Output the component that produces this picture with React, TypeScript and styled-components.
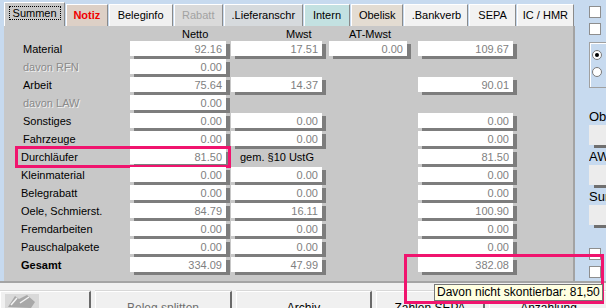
import React from 'react';
import styled, { createGlobalStyle } from 'styled-components';

type Row = {
  label: string;
  netto?: string;
  mwst?: string;
  at?: string;
  total?: string;
  note?: string;
  muted?: boolean;
  bold?: boolean;
  indent?: number;
  highlight?: boolean;
};

const rows: Row[] = [
  { label: 'Material', netto: '92.16', mwst: '17.51', at: '0.00', total: '109.67', indent: 2 },
  { label: 'davon RFN', netto: '0.00', muted: true, indent: 2 },
  { label: 'Arbeit', netto: '75.64', mwst: '14.37', total: '90.01', indent: 2 },
  { label: 'davon LAW', netto: '0.00', muted: true, indent: 2 },
  { label: 'Sonstiges', netto: '0.00', mwst: '0.00', total: '0.00', indent: 2 },
  { label: 'Fahrzeuge', netto: '0.00', mwst: '0.00', total: '0.00', indent: 2 },
  { label: 'Durchläufer', netto: '81.50', note: 'gem. §10 UstG', total: '81.50', highlight: true },
  { label: 'Kleinmaterial', netto: '0.00', mwst: '0.00', total: '0.00' },
  { label: 'Belegrabatt', netto: '0.00', mwst: '0.00', total: '0.00' },
  { label: 'Oele, Schmierst.', netto: '84.79', mwst: '16.11', total: '100.90' },
  { label: 'Fremdarbeiten', netto: '0.00', mwst: '0.00', total: '0.00' },
  { label: 'Pauschalpakete', netto: '0.00', mwst: '0.00', total: '0.00' },
  { label: 'Gesamt', netto: '334.09', mwst: '47.99', total: '382.08', bold: true },
];

const tabs = [
  { label: 'Summen', w: 62, bg: '#c8c8c8', active: true },
  { label: 'Notiz', w: 42, bg: '#ddd0c6', color: '#f00000', bold: true },
  { label: 'Beleginfo', w: 65, bg: '#f0f0f0' },
  { label: 'Rabatt', w: 50, bg: '#dadada', color: '#a2a2a2' },
  { label: '.Lieferanschr', w: 80, bg: '#d6dadd' },
  { label: 'Intern', w: 47, bg: '#c3e1e1' },
  { label: 'Obelisk', w: 53, bg: '#e3dcd2' },
  { label: '.Bankverb', w: 65, bg: '#f2f2f2' },
  { label: 'SEPA', w: 47, bg: '#f2f2f2' },
  { label: 'IC / HMR', w: 58, bg: '#f2f2f2' },
];

const buttons = [
  { label: '', w: 91, icon: true },
  { label: 'Beleg splitten', w: 137, muted: true },
  { label: 'Archiv', w: 136 },
  { label: 'Zahlen SEPA', w: 109 },
  { label: 'Anzahlung', w: 120 },
];

const App = () => {
  return (
    <Screen>
      <GlobalStyle />
      <Top>
        <Main>
          <TabBar>
            {tabs.map((t) => (
              <Tab key={t.label} $w={t.w} $bg={t.bg} $active={!!t.active} $color={t.color} $bold={!!t.bold}>
                {t.active ? <Focus>{t.label}</Focus> : t.label}
              </Tab>
            ))}
          </TabBar>
          <Panel>
            <HeaderRow>
              <span />
              <HeaderCell $pl={52}>Netto</HeaderCell>
              <HeaderCell $pl={55}>Mwst</HeaderCell>
              <HeaderCell $pl={20}>AT-Mwst</HeaderCell>
              <span />
            </HeaderRow>
            {rows.map((r) => (
              <SumRow key={r.label}>
                <Label $muted={!!r.muted} $bold={!!r.bold} $indent={r.indent ?? 0}>
                  {r.label}
                </Label>
                <Cell>{r.netto && <Field $w={96}>{r.netto}</Field>}</Cell>
                <Cell>
                  {r.mwst && <Field $w={91}>{r.mwst}</Field>}
                  {r.note && <Note>{r.note}</Note>}
                </Cell>
                <Cell>{r.at && <Field $w={78}>{r.at}</Field>}</Cell>
                <Cell>{r.total && <Field $w={95}>{r.total}</Field>}</Cell>
                {r.highlight && <RowMark />}
              </SumRow>
            ))}
          </Panel>
        </Main>
        <Side>
          <Check $mt={6} />
          <Check $mt={5} />
          <Group>
            <Radio $on />
            <Radio />
          </Group>
          <SideLabel $mt={22}>Ob</SideLabel>
          <SideField />
          <SideLabel $mt={5}>AW</SideLabel>
          <SideField />
          <SideLabel $mt={5}>Sur</SideLabel>
          <SideField />
          <Check $mt={23} />
          <Check $mt={6} />
        </Side>
      </Top>
      <Bottom>
        <ButtonRow>
          {buttons.map((b, i) => (
            <BarButton key={i} $w={b.w} $muted={!!b.muted}>
              {b.icon ? (
                <svg width="34" height="16" viewBox="0 0 34 16">
                  <rect x="0" y="1" width="34" height="15" fill="#d9d9d9" />
                  <path d="M3 14 L10 3 L14 6 L22 2 L30 9 L26 15 Z" fill="#a8a8a8" />
                  <path d="M6 12 L12 5 M15 10 L24 4" stroke="#f4f4f4" strokeWidth="1.5" />
                </svg>
              ) : (
                b.label
              )}
            </BarButton>
          ))}
        </ButtonRow>
      </Bottom>
      <Callout />
      <Tip>Davon nicht skontierbar: 81,50</Tip>
    </Screen>
  );
};

export default App;

const GlobalStyle = createGlobalStyle`
  html, body {
    margin: 0;
    padding: 0;
  }
  body {
    width: 606px;
    height: 308px;
    overflow: hidden;
    background: #f0f0f0;
    font-family: 'Liberation Sans', Arial, sans-serif;
  }
  * {
    box-sizing: border-box;
  }
`;

const Screen = styled.div`
  position: relative;
  width: 606px;
  height: 308px;
  display: flex;
  flex-direction: column;
  overflow: hidden;
`;

const Top = styled.div`
  display: flex;
  flex-shrink: 0;
  height: 281px;
  background: #c7daef;
`;

const Main = styled.div`
  display: flex;
  flex-direction: column;
  width: 575px;
  padding: 2px 0 0 4px;
`;

const TabBar = styled.div`
  display: flex;
  align-items: flex-end;
  height: 24px;
`;

const Tab = styled.div<{ $w: number; $bg: string; $active: boolean; $color?: string; $bold: boolean }>`
  width: ${({ $w }) => $w}px;
  height: ${({ $active }) => ($active ? 24 : 22)}px;
  margin-right: 1px;
  display: flex;
  align-items: center;
  justify-content: center;
  padding-bottom: ${({ $active }) => ($active ? 3 : 1)}px;
  background: ${({ $bg }) => $bg};
  color: ${({ $color }) => $color ?? '#000000'};
  font-size: 11px;
  font-weight: ${({ $bold }) => ($bold ? 700 : 400)};
  border-top: 1px solid #ffffff;
  border-left: 1px solid #ffffff;
  border-right: 1px solid #8a8a8a;
  white-space: nowrap;
`;

const Focus = styled.span`
  border: 1px dotted #000000;
  padding: 0 3px;
  line-height: 12px;
`;

const Panel = styled.div`
  flex: 1;
  background: #c8c8c8;
  border-right: 2px solid #a3a3a3;
  padding: 0 0 0 17px;
`;

const HeaderRow = styled.div`
  display: grid;
  grid-template-columns: 109px 101px 98px 89px 95px;
  height: 15px;
  padding-top: 2px;
  font-size: 11px;
  line-height: 13px;
  color: #000000;
`;

const HeaderCell = styled.span<{ $pl: number }>`
  padding-left: ${({ $pl }) => $pl}px;
  white-space: nowrap;
`;

const SumRow = styled.div`
  position: relative;
  display: grid;
  grid-template-columns: 109px 101px 98px 89px 95px;
  height: 18px;
`;

const Label = styled.div<{ $muted: boolean; $bold: boolean; $indent: number }>`
  padding: 1px 0 0 ${({ $indent }) => $indent}px;
  font-size: 11px;
  line-height: 15px;
  font-weight: ${({ $bold }) => ($bold ? 700 : 400)};
  color: ${({ $muted }) => ($muted ? '#8a8a8a' : '#000000')};
  text-shadow: ${({ $muted }) => ($muted ? '1px 1px 0 #f2f2f2' : 'none')};
  white-space: nowrap;
`;

const Cell = styled.div`
  display: flex;
  align-items: flex-start;
`;

const Field = styled.div<{ $w: number }>`
  width: ${({ $w }) => $w}px;
  height: 15px;
  background: #ffffff;
  box-shadow: 4px 3px 0 #7d7d7d;
  padding-right: 4px;
  text-align: right;
  font-size: 11px;
  line-height: 16px;
  color: #7f7f7f;
`;

const Note = styled.span`
  padding: 1px 0 0 9px;
  font-size: 11px;
  line-height: 15px;
  color: #000000;
  white-space: nowrap;
`;

const RowMark = styled.div`
  position: absolute;
  left: -6px;
  top: -3px;
  width: 216px;
  height: 22px;
  border: 3px solid #f0146e;
`;

const Side = styled.div`
  flex: 1;
  display: flex;
  flex-direction: column;
  padding-left: 14px;
`;

const Check = styled.div<{ $mt: number }>`
  width: 12px;
  height: 12px;
  flex-shrink: 0;
  margin-top: ${({ $mt }) => $mt}px;
  background: #ffffff;
  border: 1px solid #8e8e8e;
`;

const Group = styled.div`
  margin-top: 7px;
  height: 46px;
  flex-shrink: 0;
  border: 1px solid #a0a0a0;
  border-right: none;
  box-shadow: inset 1px 1px 0 #ffffff;
  padding: 7px 0 0 2px;
  display: flex;
  flex-direction: column;
  gap: 7px;
`;

const Radio = styled.div<{ $on?: boolean }>`
  position: relative;
  width: 10px;
  height: 10px;
  border-radius: 50%;
  background: #ffffff;
  border: 1px solid #7a7a7a;
  &::after {
    content: '';
    display: ${({ $on }) => ($on ? 'block' : 'none')};
    position: absolute;
    left: 2px;
    top: 2px;
    width: 4px;
    height: 4px;
    border-radius: 50%;
    background: #000000;
  }
`;

const SideLabel = styled.div<{ $mt: number }>`
  margin-top: ${({ $mt }) => $mt}px;
  flex-shrink: 0;
  font-size: 13px;
  line-height: 14px;
  color: #000000;
  white-space: nowrap;
  overflow: hidden;
`;

const SideField = styled.div`
  height: 20px;
  flex-shrink: 0;
  margin-top: 1px;
  background: #ececec;
  box-shadow: 5px 3px 0 #6f6f6f;
`;

const Bottom = styled.div`
  flex: 1;
  min-height: 0;
  overflow: hidden;
  background: #f0f0f0;
  border-top: 2px solid #a4a4a4;
  padding-top: 8px;
`;

const ButtonRow = styled.div`
  display: flex;
  gap: 4px;
  height: 30px;
`;

const BarButton = styled.div<{ $w: number; $muted: boolean }>`
  width: ${({ $w }) => $w}px;
  flex-shrink: 0;
  border-top: 1px solid #ffffff;
  border-left: 1px solid #ffffff;
  border-right: 2px solid #6a6a6a;
  box-shadow: 0 -1px 0 #d8d8d8;
  padding-top: 9px;
  text-align: center;
  font-size: 12px;
  line-height: 14px;
  color: ${({ $muted }) => ($muted ? '#6e6e6e' : '#000000')};
  white-space: nowrap;
  & > svg {
    display: block;
    margin: -8px 0 0 4px;
  }
`;

const Callout = styled.div`
  position: absolute;
  left: 404px;
  top: 254px;
  width: 200px;
  height: 50px;
  border: 3px solid #f0146e;
`;

const Tip = styled.div`
  position: absolute;
  left: 434px;
  top: 284px;
  height: 17px;
  padding: 0 2px;
  background: #ffffe1;
  border: 1px solid #767676;
  font-size: 12px;
  line-height: 15px;
  color: #000000;
  white-space: nowrap;
`;
